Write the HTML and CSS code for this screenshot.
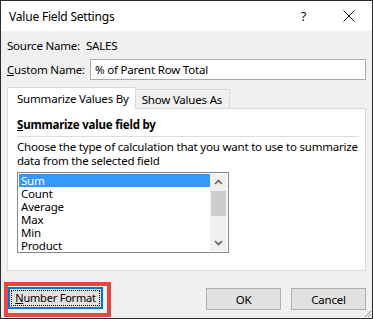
FILE: index.html
```html
<!DOCTYPE html>
<html lang="en">

<head>
    <meta charset="UTF-8">
    <title>Value Field Settings</title>
    <link rel="stylesheet" href="styles.css">
</head>

<body>
    <div class="dialog">
        <div class="title-bar">
            <span class="title">Value Field Settings</span>
            <span class="help">?</span>
            <svg class="close" width="12" height="12" viewBox="0 0 12 12">
                <path d="M0.5 0.5 L11.5 11.5 M11.5 0.5 L0.5 11.5" stroke="#1a1a1a" stroke-width="1" fill="none" />
            </svg>
        </div>

        <div class="dialog-body">
            <div class="field-row">
                <span class="field-label source-label">Source Name:</span>
                <span>SALES</span>
            </div>
            <div class="field-row custom-row">
                <label class="field-label" for="customName"><u>C</u>ustom Name:</label>
                <input type="text" id="customName" class="name-input" value="% of Parent Row Total">
            </div>

            <div class="tabs">
                <div class="tab active">Summarize Values By</div>
                <div class="tab">Show Values As</div>
            </div>

            <div class="tab-panel">
                <div class="group-title"><u>S</u>ummarize value field by</div>
                <p class="hint">Choose the type of calculation that you want to use to summarize data from the selected field</p>

                <div class="listbox">
                    <ul class="list-items">
                        <li class="selected">Sum</li>
                        <li>Count</li>
                        <li>Average</li>
                        <li>Max</li>
                        <li>Min</li>
                        <li>Product</li>
                    </ul>
                    <div class="scrollbar">
                        <svg class="arrow" width="17" height="17" viewBox="0 0 17 17">
                            <path d="M5 10 L8.5 6.5 L12 10" stroke="#606060" stroke-width="1.6" fill="none" />
                        </svg>
                        <div class="track">
                            <div class="thumb"></div>
                        </div>
                        <svg class="arrow" width="17" height="17" viewBox="0 0 17 17">
                            <path d="M5 7 L8.5 10.5 L12 7" stroke="#606060" stroke-width="1.6" fill="none" />
                        </svg>
                    </div>
                </div>
            </div>

            <div class="footer">
                <div class="highlight-box">
                    <button type="button" class="btn btn-focus"><span class="focus-ring"><u>N</u>umber Format</span></button>
                </div>
                <div class="footer-right">
                    <button type="button" class="btn">OK</button>
                    <button type="button" class="btn">Cancel</button>
                </div>
            </div>
        </div>

        <svg class="grip" width="8" height="8" viewBox="0 0 8 8">
            <path d="M7 1 L1 7 M7 4 L4 7" stroke="#8a8a8a" stroke-width="1" fill="none" />
        </svg>
    </div>
</body>

</html>
```

FILE: styles.css
```css
:root {
    --window-border: #2b2b2b;
    --face-color: #f0f0f0;
    --text-color: #000000;
    --panel-border: #d9d9d9;
    --button-face: #e1e1e1;
    --button-border: #adadad;
    --select-color: #3399ff;
    --focus-blue: #0078d7;
    --annotate-red: #e8453c;
}

* {
    box-sizing: border-box;
}

body {
    margin: 0;
    font-family: "Noto Sans", "Open Sans", sans-serif;
    font-size: 11.5px;
    letter-spacing: -0.2px;
    color: var(--text-color);
    background: #ffffff;
}

.dialog {
    position: relative;
    width: 373px;
    height: 319px;
    border: 1px solid var(--window-border);
    background: var(--face-color);
    display: flex;
    flex-direction: column;
}

.title-bar {
    height: 30px;
    background: #ffffff;
    display: flex;
    align-items: center;
    padding-left: 8px;
    font-size: 12px;
}

.title {
    flex-grow: 1;
}

.help {
    margin-right: 37px;
    font-size: 12px;
}

.close {
    margin-right: 17px;
}

.dialog-body {
    flex-grow: 1;
    display: flex;
    flex-direction: column;
    padding: 6px 8px 0 6px;
}

.field-row {
    display: flex;
    align-items: center;
    height: 16px;
}

.field-label {
    width: 83px;
    flex-shrink: 0;
}

.source-label {
    width: 79px;
}

.custom-row {
    height: 21px;
    margin-top: 6px;
}

.name-input {
    flex-grow: 1;
    height: 21px;
    border: 1px solid #a9a9a9;
    padding: 0 4px;
    font: inherit;
    letter-spacing: inherit;
    color: var(--text-color);
    background: #ffffff;
    margin-right: -2px;
}

.tabs {
    display: flex;
    align-items: flex-end;
    margin-top: 7px;
    height: 21px;
    position: relative;
    z-index: 1;
}

.tab {
    height: 19px;
    padding: 0 7px 0 6px;
    border: 1px solid var(--panel-border);
    border-bottom: none;
    background: var(--face-color);
    display: flex;
    align-items: center;
}

.tab.active {
    height: 22px;
    margin-bottom: -1px;
    background: #ffffff;
    padding: 0 6px 0 9px;
    border-right: none;
}

.tab-panel {
    height: 163px;
    margin-right: -2px;
    background: #ffffff;
    border: 1px solid var(--panel-border);
    padding: 8px 6px 0 9px;
}

.group-title {
    font-weight: bold;
    line-height: 16px;
    padding-bottom: 3px;
    border-bottom: 1px solid #dcdcdc;
}

.hint {
    margin: 3px 0 0;
    line-height: 14px;
}

.listbox {
    display: flex;
    width: 212px;
    height: 81px;
    margin-top: 4px;
    border: 1px solid #828790;
    padding: 1px;
}

.list-items {
    list-style: none;
    margin: 0;
    padding: 0;
    flex-grow: 1;
}

.list-items li {
    height: 13px;
    line-height: 13px;
    padding-left: 2px;
    font-size: 11.5px;
}

.list-items li.selected {
    background: var(--select-color);
    color: #ffffff;
}

.scrollbar {
    width: 17px;
    display: flex;
    flex-direction: column;
    background: var(--face-color);
}

.arrow {
    flex-shrink: 0;
}

.track {
    flex-grow: 1;
}

.thumb {
    height: 25px;
    margin: 0 1px;
    background: #cdcdcd;
}

.footer {
    display: flex;
    justify-content: space-between;
    align-items: flex-start;
    margin-top: 11px;
    margin-left: -3px;
}

.highlight-box {
    border: 4px solid var(--annotate-red);
    padding: 1px 4px 4px 0;
}

.btn {
    width: 75px;
    height: 22px;
    background: var(--button-face);
    border: 1px solid var(--button-border);
    font: inherit;
    letter-spacing: inherit;
    color: var(--text-color);
    padding: 0;
}

.btn-focus {
    width: 95px;
    border: 2px solid var(--focus-blue);
    padding: 1px;
}

.focus-ring {
    display: block;
    height: 100%;
    line-height: 14px;
    text-align: center;
    white-space: nowrap;
    font-size: 11px;
    letter-spacing: -0.2px;
    border: 1px dotted #000000;
}

.footer-right {
    display: flex;
    gap: 10px;
    margin-top: 6px;
    margin-right: -2px;
}

.grip {
    position: absolute;
    right: 0;
    bottom: 0;
}
```
